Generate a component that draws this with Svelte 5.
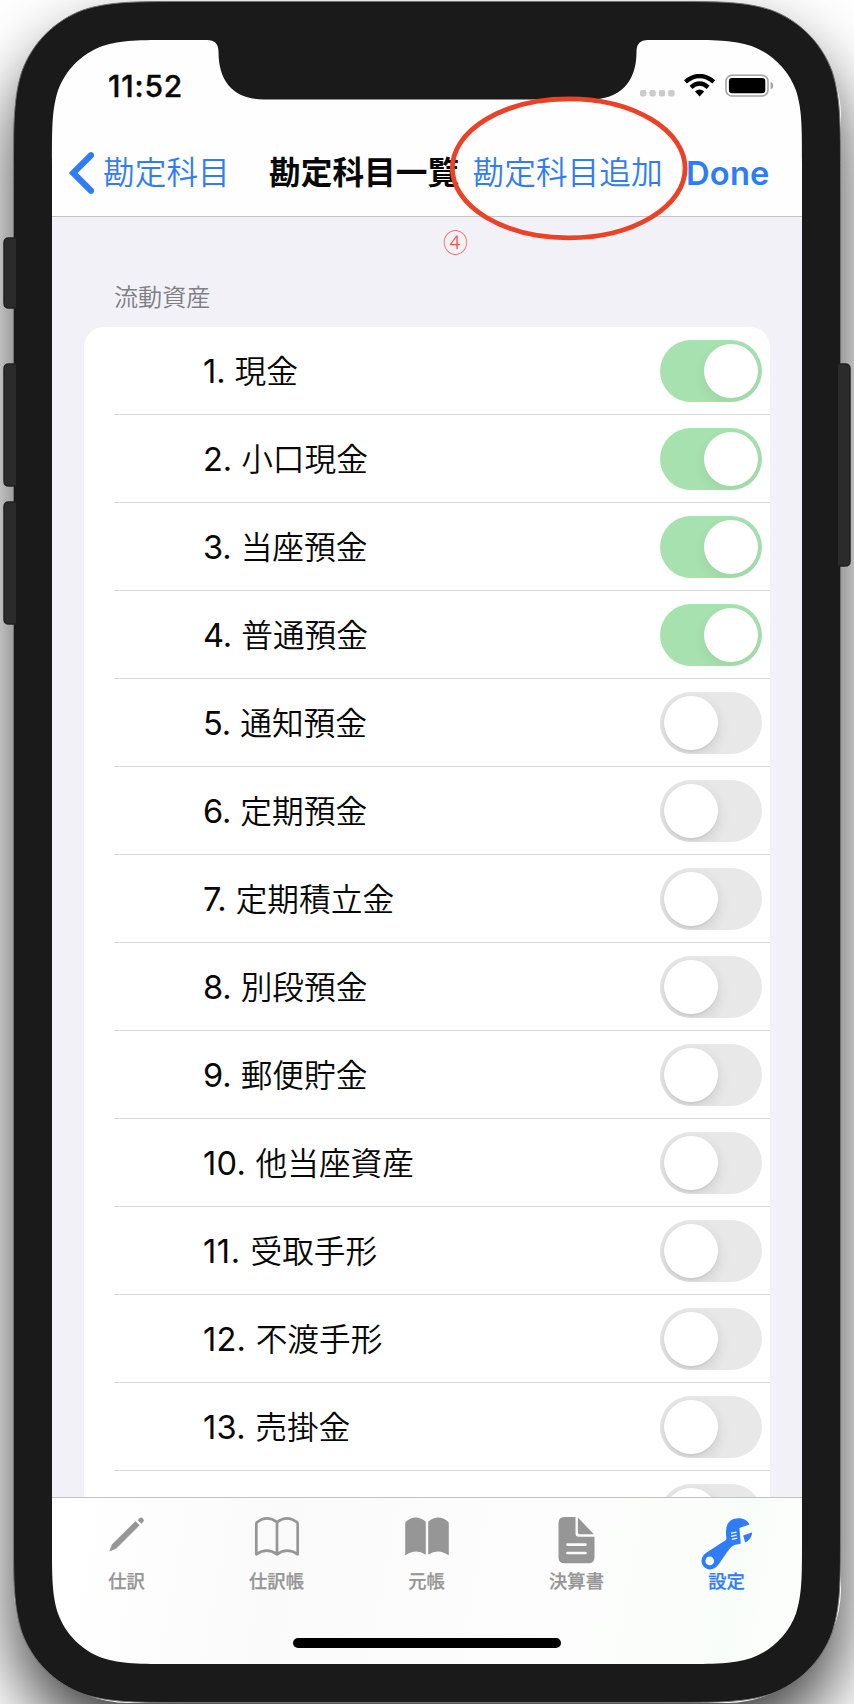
<script>
  const accounts = ['現金', '小口現金', '当座預金', '普通預金', '通知預金', '定期預金', '定期積立金', '別段預金', '郵便貯金', '他当座資産', '受取手形', '不渡手形', '売掛金', ''];
  const tabs = ['仕訳', '仕訳帳', '元帳', '決算書', '設定'];

  // Rounded rectangle with continuous-curvature corners.
  function smoothRect(x0, y0, x1, y1, r, top = '') {
    const k = [1.52866, 1.08849, 0.86841, 0.63149, 0.37282, 0.16906, 0.07491].map((v) => v * r);
    const [a, b, c, d, e, f, g] = k;
    return `M${x0 + a} ${y0} ${top} L${x1 - a} ${y0}
      C${x1 - b} ${y0} ${x1 - c} ${y0} ${x1 - d} ${y0 + g} C${x1 - e} ${y0 + f} ${x1 - f} ${y0 + e} ${x1 - g} ${y0 + d}
      C${x1} ${y0 + c} ${x1} ${y0 + b} ${x1} ${y0 + a} L${x1} ${y1 - a}
      C${x1} ${y1 - b} ${x1} ${y1 - c} ${x1 - g} ${y1 - d} C${x1 - f} ${y1 - e} ${x1 - e} ${y1 - f} ${x1 - d} ${y1 - g}
      C${x1 - c} ${y1} ${x1 - b} ${y1} ${x1 - a} ${y1} L${x0 + a} ${y1}
      C${x0 + b} ${y1} ${x0 + c} ${y1} ${x0 + d} ${y1 - g} C${x0 + e} ${y1 - f} ${x0 + f} ${y1 - e} ${x0 + g} ${y1 - d}
      C${x0} ${y1 - c} ${x0} ${y1 - b} ${x0} ${y1 - a} L${x0} ${y0 + a}
      C${x0} ${y0 + b} ${x0} ${y0 + c} ${x0 + g} ${y0 + d} C${x0 + f} ${y0 + e} ${x0 + e} ${y0 + f} ${x0 + d} ${y0 + g}
      C${x0 + c} ${y0} ${x0 + b} ${y0} ${x0 + a} ${y0}Z`;
  }
  const notch = 'L207 40 C215 40 218.5 44 218.5 52 C218.5 83 235 99.5 264 99.5 L590 99.5 C619 99.5 636.5 83 636.5 52 C636.5 44 640 40 648 40';
  const outer = smoothRect(13.5, 1.5, 840.5, 1702.5, 111);
  const inner = smoothRect(52, 40, 802, 1664, 80, notch);
</script>

<div class="stage">
  <div class="device">
    <div class="screen">
      <header>
        <div class="status">
          <span class="time">11:52</span>
          <svg class="indicators" width="136" height="26" viewBox="0 0 136 26">
            <g fill="#cbcbcb">
              <rect x="0" y="16" width="6.4" height="6.4" rx="2" /><rect x="9.4" y="16" width="6.4" height="6.4" rx="2" />
              <rect x="18.8" y="16" width="6.4" height="6.4" rx="2" /><rect x="28.2" y="16" width="6.4" height="6.4" rx="2" />
            </g>
            <g fill="none" stroke="#000" stroke-width="4.3">
              <path d="M45.4 7.8 Q59.6 -3.8 73.8 7.8" /><path d="M51 13.4 Q59.6 5.8 68.2 13.4" />
            </g>
            <path d="M55 17.6 Q59.6 13.6 64.2 17.6 L59.6 22.4Z" />
            <rect x="86" y="1.2" width="42" height="20.8" rx="6" fill="none" stroke="#a2a2a2" stroke-width="1.6" />
            <rect x="88.9" y="4" width="36.4" height="15.2" rx="3.3" />
            <path d="M130.6 7.8 q2.7 1.1 2.7 3.9 t-2.7 3.9Z" fill="#a2a2a2" />
          </svg>
        </div>
        <nav>
          <svg width="26" height="44" viewBox="0 0 26 44"><path d="M23 4.2 L5.2 22 L23 39.8" fill="none" stroke="#2f7df6" stroke-width="6.2" stroke-linecap="round" stroke-linejoin="miter" /></svg>
          <span class="back">勘定科目</span>
          <strong class="title">勘定科目一覧</strong>
          <span class="add">勘定科目追加</span>
          <strong class="done">Done</strong>
        </nav>
      </header>
      <main>
        <h2>流動資産</h2>
        <div class="card">
          {#each accounts as name, i}
            <div class="row">
              <span class="label">{#if name}<span class="num" class:wide={i >= 9} class:ones={i === 10}>{i + 1}.&nbsp;</span>{name}{/if}</span>
              <span class="switch" class:on={i < 4}><i></i></span>
            </div>
          {/each}
        </div>
      </main>
      <footer>
        <div class="tabs">
          {#each tabs as tab, i}
            <div class="tab" class:active={i === 4}>
              <svg width="60" height="60" viewBox="0 0 60 60" fill="currentColor">
                {#if i === 0}
                  <path d="M12.7 41.1 L15.2 34.4 L38.5 11.4 L42.4 15.2 L19 38.4Z" stroke="currentColor" stroke-width=".6" stroke-linejoin="round" />
                  <path d="M40.7 10.2 L42.4 8.3 Q44.2 6.7 46 8.4 Q47.8 10.2 46.2 12 L44.3 13.8Z" />
                {:else if i === 1}
                  <path d="M9.3 44.3 V14 Q9.3 12.7 10.4 12 Q20 4.7 30 12.2 Q40 4.7 49.6 12 Q50.7 12.7 50.7 14 V44.3 Q40 36.8 30 44.3 Q20 36.8 9.3 44.3Z M30 12.2 V44.3" fill="none" stroke="currentColor" stroke-width="2.7" stroke-linejoin="round" />
                {:else if i === 2}
                  <path d="M8.2 13.3 Q8.2 12.1 9.1 11.4 Q18.5 3.6 28.8 11.7 V44.8 Q19 37.9 8.6 45.2 Q8.2 45.3 8.2 44.8Z M51.8 13.3 Q51.8 12.1 50.9 11.4 Q41.5 3.6 31.2 11.7 V44.8 Q41 37.9 51.4 45.2 Q51.8 45.3 51.8 44.8Z" />
                {:else if i === 3}
                  <path d="M17.5 7 H28.5 V23.5 Q28.5 26.8 31.9 26.8 H47.5 V47.3 Q47.5 53.3 41.5 53.3 H17.5 Q11.5 53.3 11.5 47.3 V13 Q11.5 7 17.5 7Z" />
                  <path d="M30.9 7.6 L46.9 24.2 H32.5 Q30.9 24.2 30.9 22.6Z" />
                  <path d="M20.5 34.6 H38.5 M20.5 43 H38.5" stroke="#fafafa" stroke-width="2.7" stroke-linecap="round" />
                {:else}
                  <path fill-rule="evenodd" d="M29.5 28.5 C27.5 16.5 31 8.2 41.5 8.2 C47 8.2 51 10.8 52.4 14.5 L42.4 18 L43.8 33.6 C41 34.8 38 34.4 35.4 36.2 C32 38.6 28 45.2 21.3 54.8 C17.5 60.5 9.8 61 6.3 56 C3.2 51.5 4.2 46.8 8.5 43.2 L26.5 31.6 C28.3 30.6 29.2 30 29.5 28.5Z M12.7 46.6 A4.3 4.3 0 1 0 12.7 55.2 A4.3 4.3 0 1 0 12.7 46.6Z" />
                  <path d="M46.2 25.4 L55.2 22.2 C54.8 27 52.2 30.6 48.2 32.5Z" />
                  <path d="M34 23.4 L39.5 22.2 M34.2 26.4 L39.7 25.2 M34.8 29.4 L40.2 28.2" stroke="#fff" stroke-width="1.2" />
                {/if}
              </svg>
              <span>{tab}</span>
            </div>
          {/each}
        </div>
        <div class="home"></div>
      </footer>
    </div>
  </div>

  <svg class="frame" width="854" height="1704" viewBox="0 0 854 1704">
    <path d="{outer} {inner}" fill="#1a1a1a" fill-rule="evenodd" />
    <path d={outer} fill="none" stroke="#727272" stroke-width="1" />
    <g fill="#2b2b2b" stroke="#202020" stroke-width="1.5">
      <path d="M16 238 H9 Q4 238 4 243 V303 Q4 308 9 308 H16" />
      <path d="M16 364 H9 Q4 364 4 369 V481 Q4 486 9 486 H16" />
      <path d="M16 502 H9 Q4 502 4 507 V619 Q4 624 9 624 H16" />
      <path d="M838 364 H845 Q850 364 850 369 V561 Q850 566 845 566 H838" />
    </g>
    <ellipse cx="568.7" cy="168.3" rx="116.4" ry="69.5" fill="none" stroke="#eb4127" stroke-width="4.8" />
  </svg>
  <span class="mark">④</span>
</div>

<style>
  :global(body) { margin: 0; background: #fff; }
  .stage {
    position: relative; width: 854px; height: 1704px; overflow: hidden; box-sizing: border-box;
    padding: 2px 13px 1px 14px; font-family: Inter, 'Noto Sans CJK JP', sans-serif; color: #080808;
  }
  .device {
    height: 1701px; box-sizing: border-box; padding: 38px 38px; border-radius: 115px;
    box-shadow: 0 36px 68px rgba(0, 0, 0, 0.76);
  }
  .screen { width: 750px; height: 1624px; display: flex; flex-direction: column; border-radius: 76px; overflow: hidden; background: #f2f1f7; }
  header { height: 176px; flex: none; background: #fefefe; border-bottom: 1px solid #c3c3c5; }
  .status { height: 88px; display: flex; justify-content: space-between; box-sizing: border-box; padding: 33px 26px 0 56px; }
  .time { font-size: 30px; line-height: 26px; font-weight: 500; letter-spacing: 0.8px; -webkit-text-stroke: 0.4px; }
  .indicators { margin-top: 1px; }
  nav { height: 88px; display: flex; align-items: center; padding: 1px 0 0 16px; box-sizing: border-box; white-space: nowrap; font-size: 31.7px; line-height: 44px; color: #2f7df6; }
  nav svg { flex: none; }
  .back { margin-left: 9px; width: 127px; font-weight: 350; }
  .title { margin-left: 39px; width: 191px; color: #080808; font-weight: 700; }
  .add { margin-left: 12.5px; width: 191px; font-weight: 350; }
  .done { margin-left: 22.5px; font-weight: 600; font-size: 32.7px; letter-spacing: 0.2px; }
  main { flex: 1; min-height: 0; overflow: hidden; padding: 0 32px; }
  h2 { margin: 63px 0 0 30px; height: 47px; line-height: 36px; font-size: 24.1px; font-weight: 350; color: #7f7f84; }
  .card { background: #fff; border-radius: 20px 20px 0 0; }
  .row { height: 88px; box-sizing: border-box; margin-left: 30px; padding: 1px 8px 0 89px; display: flex; align-items: center; justify-content: space-between; border-bottom: 1px solid #d9d9db; }
  .label { padding-top: 1px; font-size: 31.7px; line-height: 44px; font-weight: 350; white-space: nowrap; }
  .num { font-weight: 400; font-size: 32.6px; letter-spacing: -0.1px; }
  .num.wide { letter-spacing: 0.25px; }
  .num.ones { letter-spacing: 0.6px; }
  .switch { width: 102px; height: 62px; border-radius: 31px; background: #e8e8e8; box-sizing: border-box; padding: 4px; display: flex; overflow: hidden; }
  .switch i { width: 54px; height: 54px; border-radius: 50%; background: #fff; box-shadow: 0 5px 14px rgba(0, 0, 0, 0.12), 0 2px 2px rgba(0, 0, 0, 0.04); }
  .switch.on { background: #a7e1af; justify-content: flex-end; }
  .switch.on i { box-shadow: 0 5px 14px rgba(0, 0, 0, 0.06); }
  footer { height: 167px; flex: none; box-sizing: border-box; border-top: 1px solid #c2c2c3; background: linear-gradient(100deg, #fff 2%, #fafafa 30%, #fdfdfd 65%, #f9fdf9 90%, #fdfefd); display: flex; flex-direction: column; align-items: center; }
  .tabs { display: flex; width: 750px; height: 140px; }
  .tab { flex: 1; display: flex; flex-direction: column; align-items: center; padding-top: 12px; color: #969696; font-size: 18.3px; font-weight: 500; line-height: 26px; }
  .tab span { margin: -2px 1px 0 0; -webkit-text-stroke: 0.25px; }
  .tab.active { color: #2f7df6; }
  .home { width: 268px; height: 10px; border-radius: 5px; background: #000; }
  .frame { position: absolute; left: 0; top: 0; }
  .mark { position: absolute; left: 443px; top: 223px; font-family: 'Noto Sans CJK JP', sans-serif; font-size: 25px; line-height: 36px; font-weight: 300; color: #ec5648; }
</style>
